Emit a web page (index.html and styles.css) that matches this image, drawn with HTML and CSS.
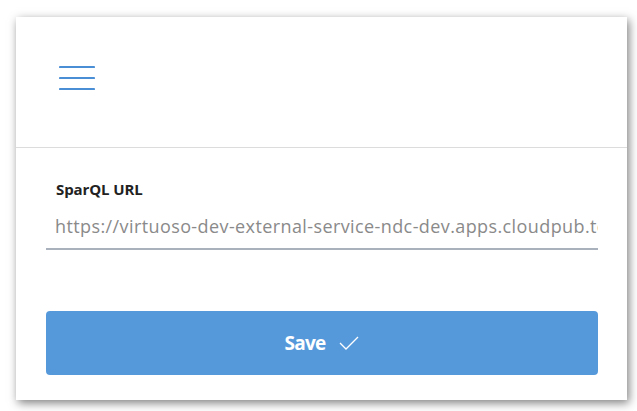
FILE: index.html
```html
<!DOCTYPE html>
<html lang="en">
<head>
  <meta charset="UTF-8">
  <title>Settings</title>
  <link rel="stylesheet" href="styles.css">
</head>
<body>
  <div class="card">
    <div class="card-header">
      <button class="menu-button" aria-label="Menu">
        <svg width="36" height="26" viewBox="0 0 36 26">
          <path d="M1 2H35M1 13H35M1 24H35" stroke="#4a8fd6" stroke-width="2.2" stroke-linecap="round" fill="none"/>
        </svg>
      </button>
    </div>

    <div class="card-body">
      <div class="form-section">
        <label for="sparql_url">SparQL URL</label>
        <input type="text" id="sparql_url" value="https://virtuoso-dev-external-service-ndc-dev.apps.cloudpub.testedev.istat.it/sparql" readonly>
      </div>

      <button class="save-button">
        Save
        <svg width="20" height="14" viewBox="0 0 20 14">
          <path d="M1 7L7 13L19 1" stroke="#ffffff" stroke-width="1.3" fill="none"/>
        </svg>
      </button>
    </div>
  </div>
</body>
</html>
```

FILE: styles.css
```css
body {
  margin: 0;
  padding: 17px 10px 11px 16px;
  background-color: #ffffff;
  font-family: "Open Sans", "Noto Sans", sans-serif;
}
.card {
  width: 611px;
  height: 383px;
  background-color: #ffffff;
  box-shadow: 2px 3px 9px rgba(0, 0, 0, 0.5);
}
.card-header {
  height: 130px;
  border-bottom: 1px solid #dcdcdc;
  display: flex;
  align-items: center;
  padding-left: 43px;
}
.menu-button {
  background: none;
  border: none;
  padding: 0;
  margin-top: -8px;
  cursor: pointer;
  line-height: 0;
}
.card-body {
  padding: 31px 29px 0 30px;
}
.form-section label {
  display: block;
  padding-left: 10px;
  font-size: 15px;
  font-weight: 700;
  color: #222222;
  letter-spacing: -0.1px;
}
.form-section input {
  display: block;
  width: 100%;
  box-sizing: border-box;
  margin-top: 9px;
  padding: 6px 0 10px 9px;
  border: none;
  border-bottom: 2px solid #a9b1bc;
  font-family: inherit;
  font-size: 18px;
  color: #8a8a8a;
  letter-spacing: 0.4px;
  outline: none;
}
.save-button {
  display: flex;
  align-items: center;
  justify-content: center;
  gap: 14px;
  width: 100%;
  height: 64px;
  margin-top: 61px;
  border: none;
  border-radius: 4px;
  background-color: #5699db;
  color: #ffffff;
  font-family: inherit;
  font-size: 19px;
  font-weight: 700;
  letter-spacing: -0.8px;
  cursor: pointer;
}
```
